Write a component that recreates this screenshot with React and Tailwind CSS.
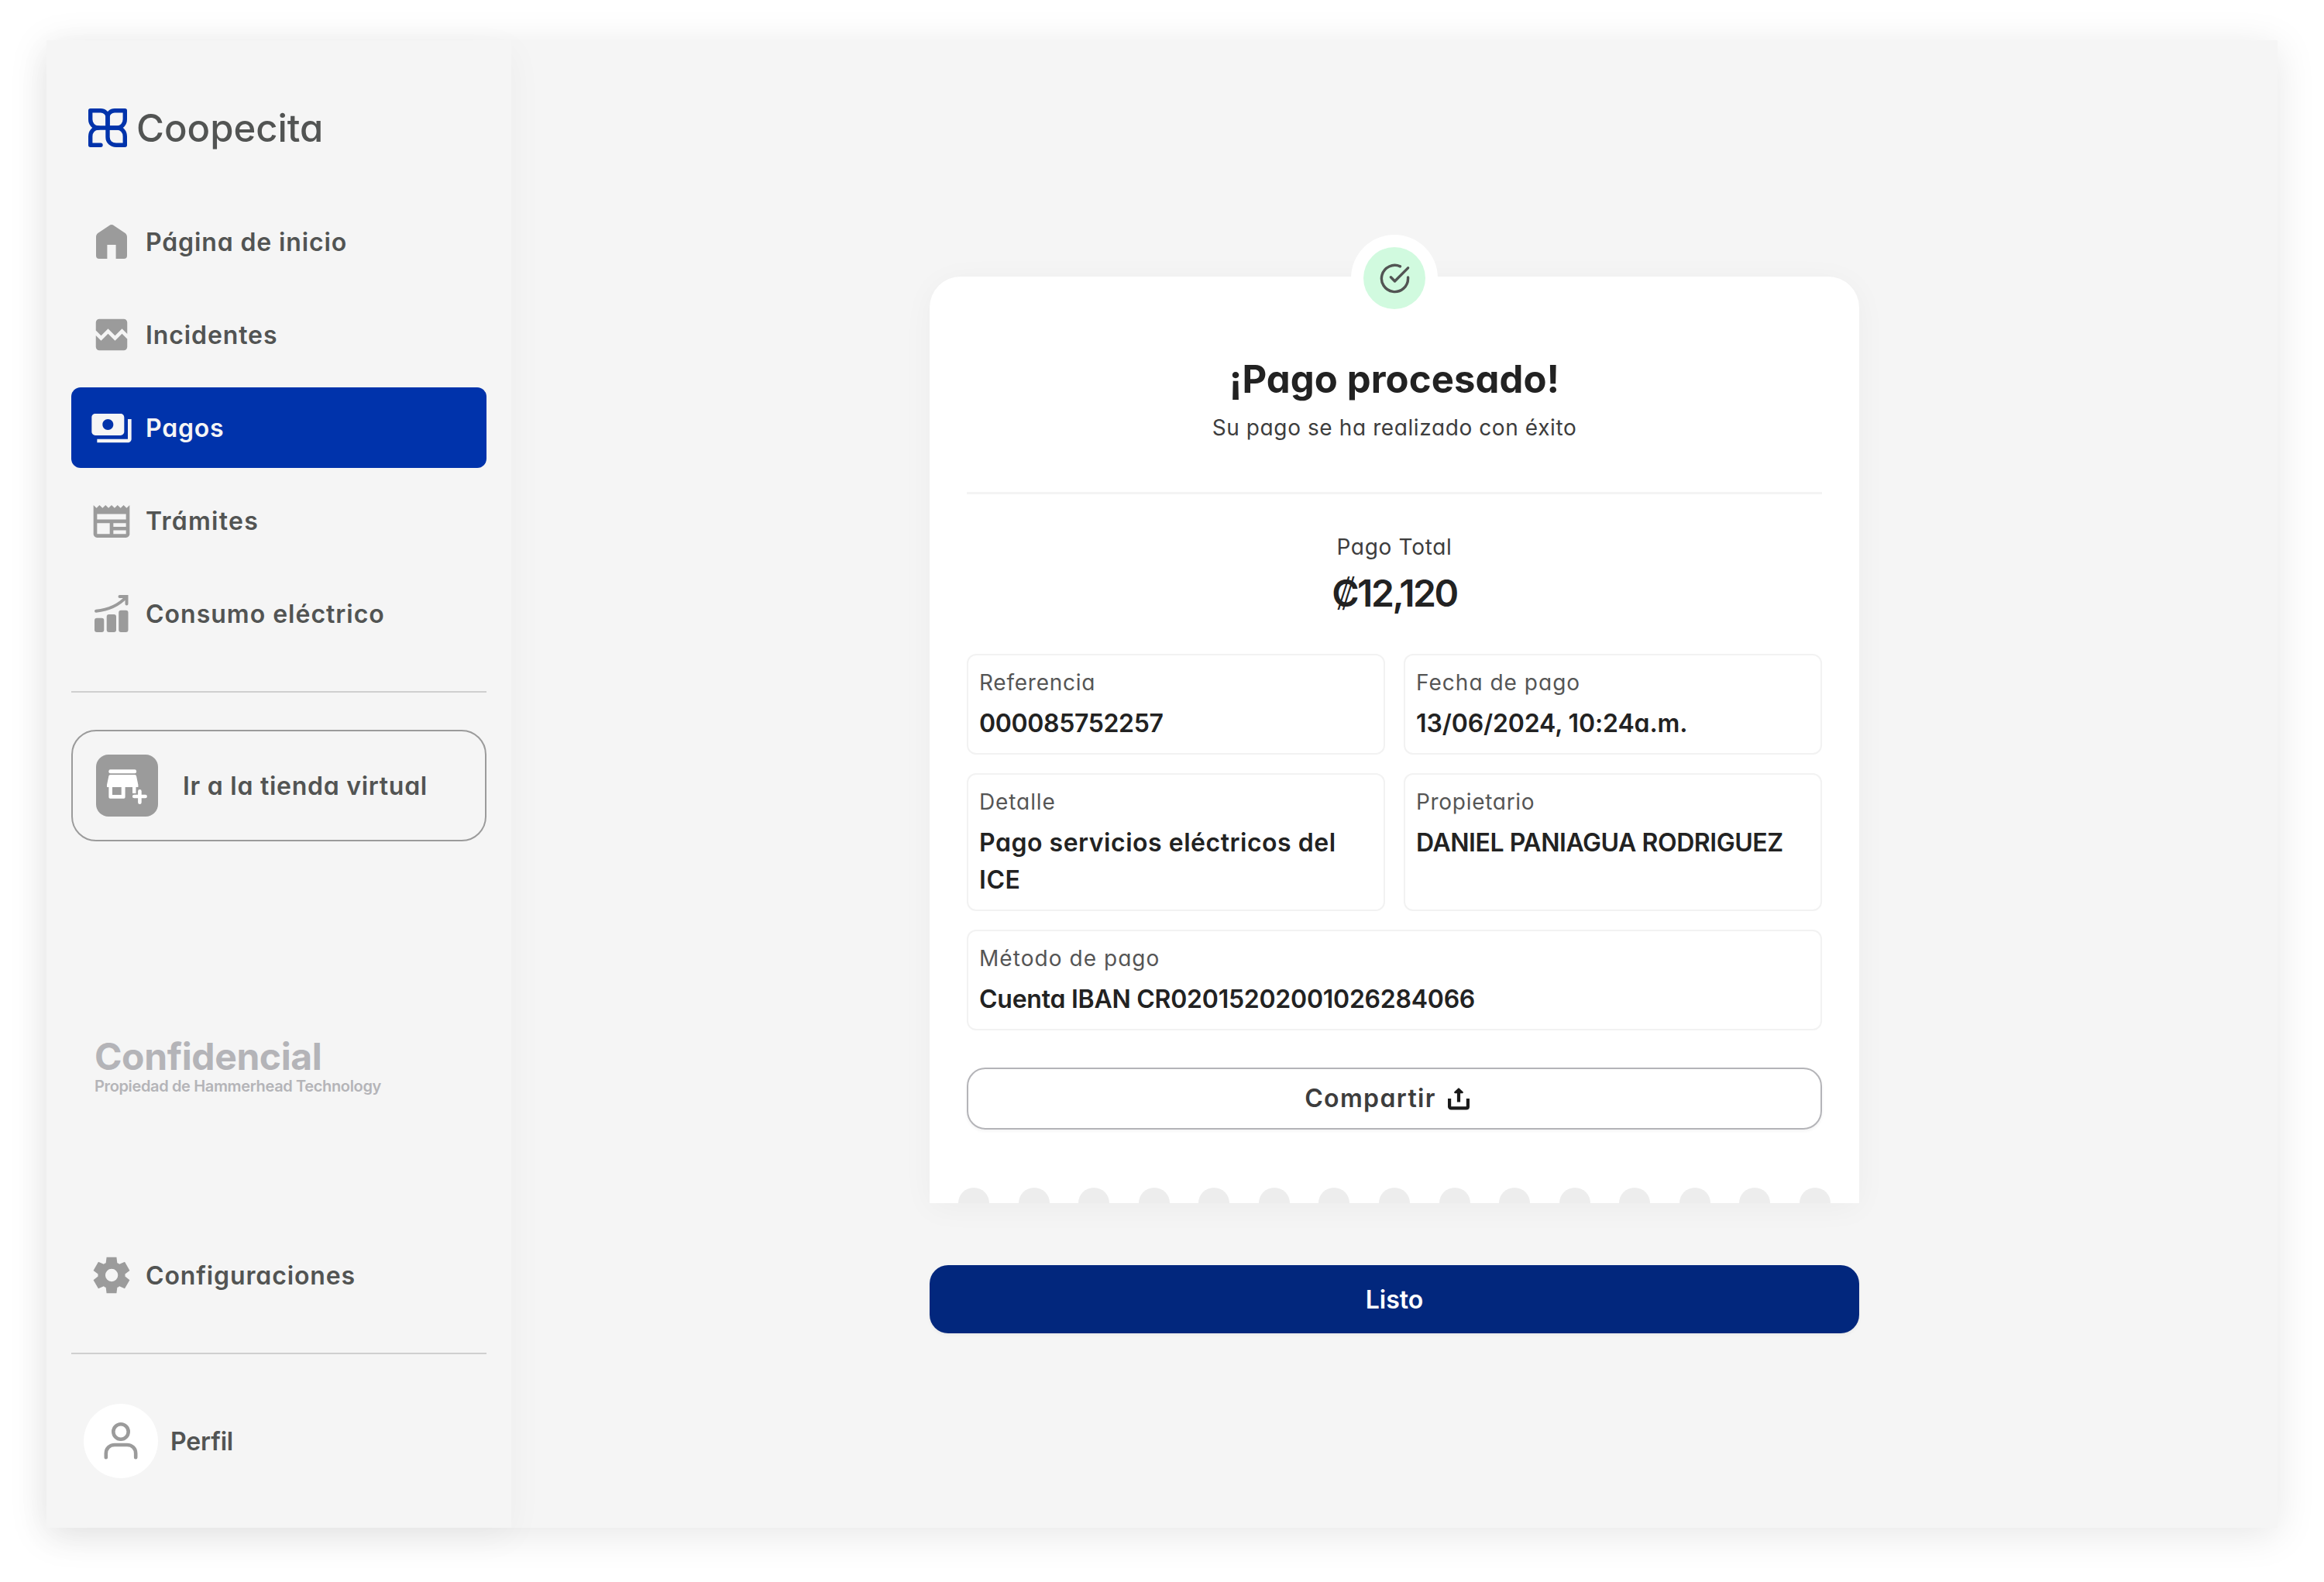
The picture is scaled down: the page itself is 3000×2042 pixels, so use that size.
const icons = {
  home: (
    <svg viewBox="0 0 56 56" className="size-14" fill="currentColor">
      <path d="M8 22c0-2 .8-3.7 2.3-5L24.9 7.2c1.9-1.6 4.3-1.6 6.2 0L45.7 17c1.5 1.3 2.3 3 2.3 5v24a4 4 0 0 1-4 4H33.6V32H22.4v18H12a4 4 0 0 1-4-4z" />
    </svg>
  ),
  incidents: (
    <svg viewBox="0 0 24 24" className="size-[54px]" fill="currentColor">
      <path d="M21 5v6.59l-3-3.01-4 4.01-4-4-4 4-3-3.01V5c0-1.1.9-2 2-2h14c1.1 0 2 .9 2 2zm-3 6.42l3 3.01V19c0 1.1-.9 2-2 2H5c-1.1 0-2-.9-2-2v-6.58l3 2.99 4-4 4 4 4-3.99z" />
    </svg>
  ),
  payments: (
    <svg viewBox="0 0 24 24" className="size-14" fill="currentColor">
      <path d="M19 14V6c0-1.1-.9-2-2-2H3c-1.1 0-2 .9-2 2v8c0 1.1.9 2 2 2h14c1.1 0 2-.9 2-2zm-9-1c-1.66 0-3-1.34-3-3s1.34-3 3-3 3 1.34 3 3-1.34 3-3 3zm13-6v11c0 1.1-.9 2-2 2H4v-2h17V7h2z" transform="translate(0 .3)" />
    </svg>
  ),
  paperwork: (
    <svg viewBox="0 0 24 24" className="size-14" fill="currentColor">
      <path d="M22 3l-1.67 1.67L18.67 3 17 4.67 15.33 3l-1.66 1.67L12 3l-1.67 1.67L8.67 3 7 4.67 5.33 3 3.67 4.67 2 3v16c0 1.1.9 2 2 2h16c1.1 0 2-.9 2-2V3zM11 19H4v-6h7v6zm9 0h-7v-2h7v2zm0-4h-7v-2h7v2zm0-4H4V8h16v3z" transform="translate(0 .4)" />
    </svg>
  ),
  usage: (
    <svg viewBox="0 0 56 56" className="size-14" fill="currentColor">
      <rect x="6" y="33.7" width="12.3" height="18.3" rx="3" />
      <rect x="21.7" y="29" width="12.3" height="23" rx="3" />
      <rect x="37.2" y="23.7" width="12.3" height="28.3" rx="3" />
      <path d="M8 24.7C24 23 37 17.5 46.5 7M38.5 6h9v9.5" fill="none" stroke="currentColor" strokeWidth="4" strokeLinecap="round" />
    </svg>
  ),
  settings: (
    <svg viewBox="0 0 24 24" className="size-14" fill="currentColor">
      <path d="M9.25 22l-.4-3.2q-.325-.125-.612-.3T7.675 18.125L4.7 19.375l-2.75-4.75 2.575-1.95Q4.5 12.5 4.5 12.338v-.675q0-.163.025-.338L1.95 9.375l2.75-4.75 2.975 1.25q.275-.2.575-.375t.6-.3l.4-3.2h5.5l.4 3.2q.325.125.613.3t.562.375l2.975-1.25 2.75 4.75-2.575 1.95q.025.175.025.338v.675q0 .163-.05.338l2.575 1.95-2.75 4.75-2.95-1.25q-.275.2-.575.375t-.6.3l-.4 3.2zm2.8-6.5q1.45 0 2.475-1.025T15.55 12t-1.025-2.475T12.05 8.5q-1.475 0-2.488 1.025T8.55 12t1.013 2.475T12.05 15.5z" />
    </svg>
  ),
};

const navItems = [
  { label: 'Página de inicio', icon: icons.home, tracking: 'tracking-[0.87px]' },
  { label: 'Incidentes', icon: icons.incidents, tracking: 'tracking-[0.9px]' },
  { label: 'Pagos', icon: icons.payments, tracking: 'tracking-[0.8px]', active: true },
  { label: 'Trámites', icon: icons.paperwork, tracking: 'tracking-[1.25px]' },
  { label: 'Consumo eléctrico', icon: icons.usage, tracking: 'tracking-[1px]' },
];

const details = [
  { label: 'Referencia', value: '000085752257', labelTracking: 'tracking-[0.75px]', valueTracking: 'tracking-[-0.35px]' },
  { label: 'Fecha de pago', value: '13/06/2024, 10:24a.m.', labelTracking: 'tracking-[1.02px]', valueTracking: 'tracking-[-0.12px]' },
  { label: 'Detalle', value: 'Pago servicios eléctricos del ICE', labelTracking: 'tracking-[0.9px]', valueTracking: 'tracking-[0.52px]' },
  { label: 'Propietario', value: 'DANIEL PANIAGUA RODRIGUEZ', labelTracking: 'tracking-[0.7px]', valueTracking: 'tracking-[-0.44px]' },
  { label: 'Método de pago', value: 'Cuenta IBAN CR02015202001026284066', labelTracking: 'tracking-[1.05px]', valueTracking: 'tracking-[-0.25px]', wide: true },
];

const Logo = () => (
  <div className="ml-[22px] flex h-[50px] items-center">
    <svg viewBox="0 0 50 50" className="size-[50px]" fill="none" stroke="#0033ab" strokeWidth="5.4" strokeLinecap="round" strokeLinejoin="round">
      <path d="M25 25H13C7 25 2.7 20 2.7 14V2.7H16C21 2.7 25 6.5 25 11z" />
      <path d="M25 25H37C43 25 47.3 20 47.3 14V2.7H34C29 2.7 25 6.5 25 11z" />
      <path d="M25 25H37C43 25 47.3 30 47.3 36V47.3H36C29.5 47.3 25 43 25 37z" />
      <path d="M13 25C7 25 2.7 30 2.7 36V47.3H16" />
    </svg>
    <span className="ml-3 pt-px text-[49px] leading-[50px] font-medium tracking-[0px] text-[#525453]">Coopecita</span>
  </div>
);

const NavItem = ({ label, icon, active, tracking }) => (
  <a className={`flex h-26 items-center gap-4 rounded-xl px-6 ${active ? 'bg-[#0033ab] text-[#f5f5f5]' : 'text-[#9b9b9b]'}`}>
    <span className="flex size-14 items-center justify-center">{icon}</span>
    <span className={`pt-0.5 text-[32px] leading-[48px] font-semibold whitespace-nowrap ${tracking} ${active ? 'text-[#f5f5f5]' : 'text-[#525453]'}`}>
      {label}
    </span>
  </a>
);

const Sidebar = () => (
  <aside className="flex w-[600px] flex-col bg-[#f5f5f5] px-8 pt-[88px] pb-16 shadow-[0_12px_44px_rgba(0,0,0,0.04)]">
    <Logo />

    <nav className="mt-[70px] flex flex-col gap-4">
      {navItems.map((item) => (
        <NavItem key={item.label} {...item} />
      ))}
    </nav>

    <hr className="mt-12 border-t-2 border-[#cfcfcf]" />

    {/* Tienda virtual */}
    <a className="mt-12 flex h-36 items-center gap-8 rounded-[32px] border-2 border-[#9b9b9b] px-[30px]">
      <span className="flex size-20 items-center justify-center rounded-2xl bg-[#9b9b9b]">
        <svg viewBox="0 0 56 56" className="size-14" fill="white">
          <rect x="4.4" y="7.2" width="35.6" height="5" rx="2" />
          <path fillRule="evenodd" d="M6.4 14H38a2 2 0 0 1 2 1.6L42.4 27v3H39.5v8H35v-8H25.6V43a1.7 1.7 0 0 1-1.7 1.7H6.1A1.7 1.7 0 0 1 4.4 43V30H2v-3l2.4-11.4A2 2 0 0 1 6.4 14zM9 30v10h11.7V30z" />
          <path d="M44.4 35.3v14.4M37.2 42h14.4" stroke="white" strokeWidth="4.6" strokeLinecap="round" />
        </svg>
      </span>
      <span className="pt-0.5 text-[32px] leading-[48px] font-semibold tracking-[0.73px] whitespace-nowrap text-[#525453]">Ir a la tienda virtual</span>
    </a>

    <div className="mt-[254px] ml-[30px] whitespace-nowrap text-[#b4b4b8] [font-feature-settings:normal]">
      <p className="text-[48px] leading-[48px] font-bold tracking-[-0.4px]">Confidencial</p>
      <p className="text-[20px] leading-[28px] font-semibold tracking-[-0.36px]">Propiedad de Hammerhead Technology</p>
    </div>

    <div className="mt-auto">
      <NavItem label="Configuraciones" icon={icons.settings} tracking="tracking-[0.88px]" />
    </div>

    <hr className="mt-12 border-t-2 border-[#cfcfcf]" />

    {/* Perfil */}
    <div className="mt-16 ml-4 flex items-center gap-4">
      <span className="flex size-24 items-center justify-center rounded-full bg-white">
        <svg viewBox="0 0 56 56" className="size-14" fill="none" stroke="#9b9b9b" strokeWidth="4.6" strokeLinecap="round">
          <circle cx="28" cy="16" r="9.7" />
          <path d="M8.8 49.3v-5.1c0-6.6 4.6-11.2 11.2-11.2h16c6.6 0 11.2 4.6 11.2 11.2v5.1" />
        </svg>
      </span>
      <span className="pt-0.5 text-[32px] leading-[48px] font-semibold tracking-[-0.15px] text-[#525453]">Perfil</span>
    </div>
  </aside>
);

const DetailBox = ({ label, value, wide, labelTracking, valueTracking }) => (
  <div className={`flex flex-col gap-2 rounded-xl border-2 border-[#f2f2f2] p-3.5 ${wide ? 'col-span-2' : ''}`}>
    <span className={`text-[28px] leading-[42px] text-[#555555] ${labelTracking}`}>{label}</span>
    <span className={`text-[32px] leading-[48px] font-semibold text-[#222222] ${valueTracking}`}>{value}</span>
  </div>
);

const Receipt = () => (
  <section className="relative flex flex-col rounded-t-[40px] bg-white px-12 pt-[97px] shadow-[0_6px_40px_rgba(0,0,0,0.04)]">
    {/* Ícono de éxito */}
    <div className="absolute -top-[54px] left-1/2 flex size-28 -translate-x-1/2 items-center justify-center rounded-full bg-white">
      <span className="flex size-20 items-center justify-center rounded-full bg-[#d1fadf]">
        <svg viewBox="0 0 24 24" className="size-[41px]" fill="none" stroke="#525453" strokeWidth="2" strokeLinecap="round" strokeLinejoin="round">
          <path d="M22 11.08V12a10 10 0 1 1-5.93-9.14" />
          <path d="M22 4L12 14.01l-3-3" />
        </svg>
      </span>
    </div>

    <h1 className="text-center text-[49px] leading-[72px] font-bold tracking-[0.1px] text-[#222222]">¡Pago procesado!</h1>
    <p className="mt-[5px] text-center text-[28px] leading-[42px] tracking-[0.6px] text-[#3d3d3d]">Su pago se ha realizado con éxito</p>

    <hr className="mt-[62px] border-t-3 border-[#f4f4f4]" />

    <p className="mt-[47px] text-center text-[28px] leading-[42px] tracking-[0.7px] text-[#3d3d3d]">Pago Total</p>
    <p className="mt-[3px] text-center text-[48px] leading-[72px] font-semibold tracking-[-2.4px] text-[#222222]">₡12,120</p>

    <div className="mt-[42px] grid grid-cols-2 gap-6">
      {details.map((item) => (
        <DetailBox key={item.label} {...item} />
      ))}
    </div>

    <button className="mt-12 flex h-20 items-center justify-center rounded-3xl border-2 border-[#b4b4b8] shadow-[0_2px_4px_rgba(0,0,0,0.05)]">
      <span className="text-[32px] leading-[48px] font-semibold tracking-[1.35px] text-[#3d3d3d]">Compartir</span>
      <svg viewBox="0 0 40 40" className="mr-[13px] ml-[9px] size-10" fill="none" stroke="#1a1a1a" strokeWidth="4.2">
        <path d="M8.1 20v10.4a2 2 0 0 0 2 2h19.800a2 2 0 0 0 2-2V20" />
        <path d="M20 24.5V10" />
        <path d="M20 7.5l-4.8 4.6h9.6z" fill="#1a1a1a" strokeWidth="2.2" strokeLinejoin="round" />
      </svg>
    </button>

    {/* Borde troquelado del recibo */}
    <div className="-mx-[11px] mt-[75px] flex justify-between">
      {Array.from({ length: 15 }, (_, i) => (
        <span key={i} className="h-5 w-10 rounded-t-full bg-[#ededed]" />
      ))}
    </div>
  </section>
);

export default function App() {
  return (
    <div className="h-[2042px] w-[3000px] overflow-hidden bg-white px-[60px] pt-[52px] font-['Inter',sans-serif] [font-feature-settings:'cv11']">
      <div className="flex h-[1920px] w-[2880px] bg-[#f5f5f5] shadow-[0_8px_48px_rgba(0,0,0,0.1)]">
        <Sidebar />
        <main className="flex flex-1 flex-col items-center pt-[305px]">
          <div className="flex w-[1200px] flex-col gap-20">
            <Receipt />
            <button className="h-22 rounded-3xl bg-[#02277d] pt-0.5 text-[32px] font-semibold text-white shadow-[0_2px_4px_rgba(0,0,0,0.05)]">
              Listo
            </button>
          </div>
        </main>
      </div>
    </div>
  );
}
